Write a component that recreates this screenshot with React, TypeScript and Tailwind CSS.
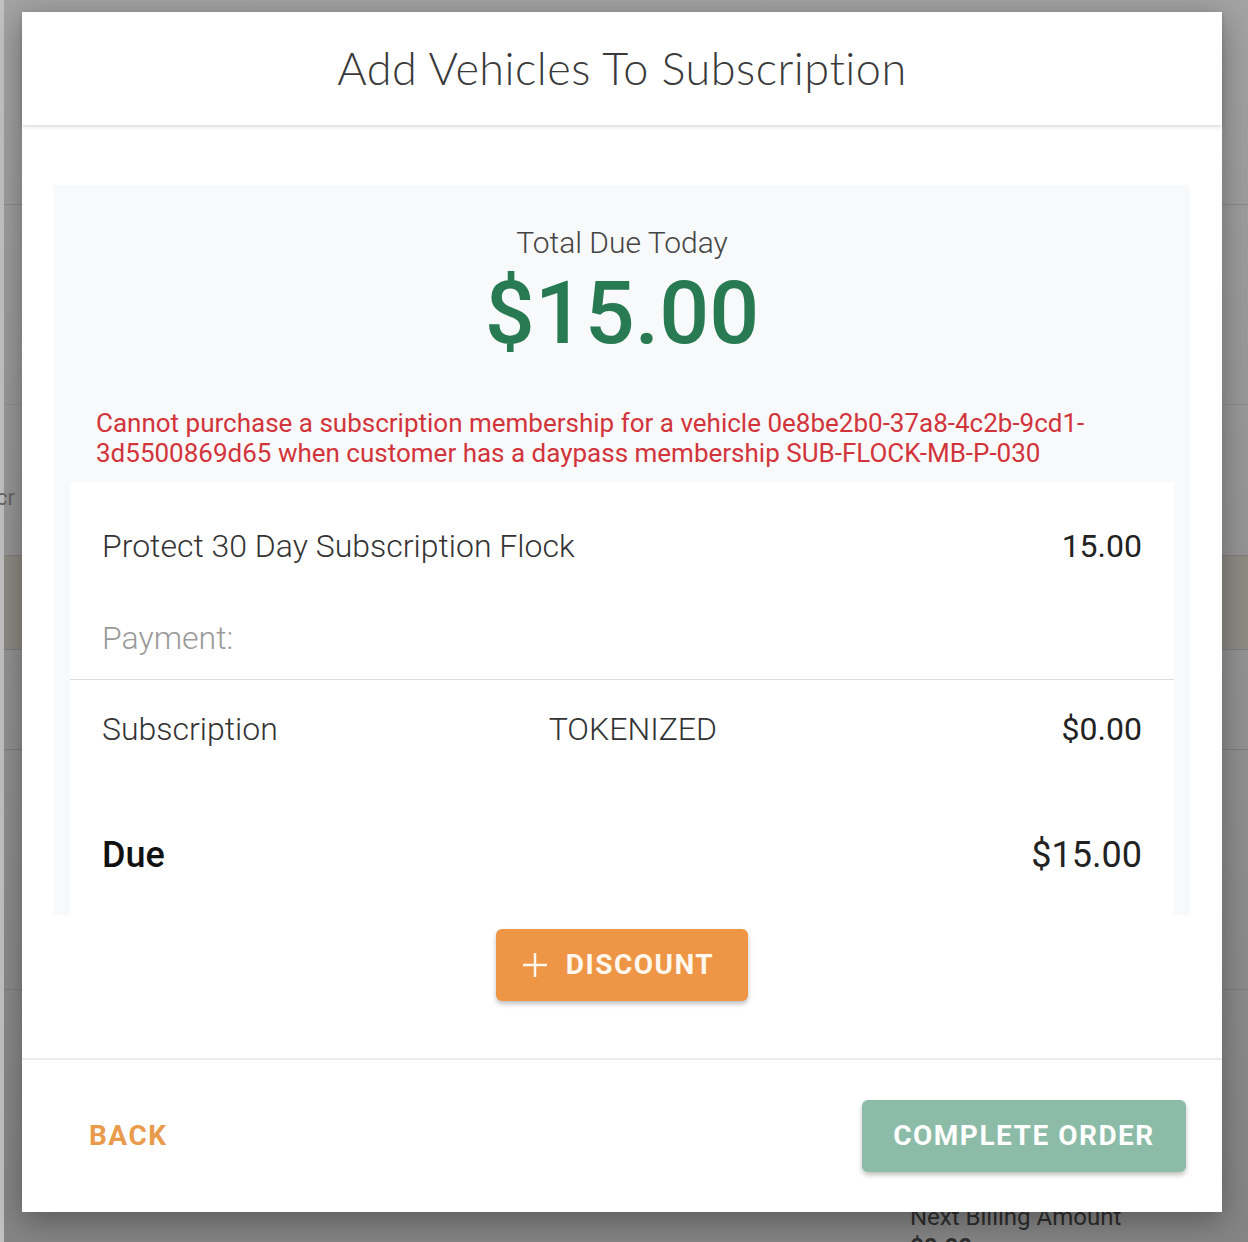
import React, { FC } from "react";

const Row: FC<{ className?: string; children: React.ReactNode }> = ({ className = "", children }) => (
  <div className={`flex items-center justify-between px-8 leading-[40px] ${className}`}>{children}</div>
);

const App: FC = () => {
  return (
    <div className="relative h-[1242px] w-[1248px] overflow-hidden bg-gradient-to-b from-[#a3a3a3] to-[#858585] font-['Roboto',sans-serif]">
      {/* page behind the overlay */}
      <div className="flex h-full flex-col border-l-4 border-[#c2c2c2]">
        <div className="h-[205px] border-b border-[#8a8a8a]" />
        <div className="h-[200px] border-b border-[#8e8e8e]" />
        <div className="flex h-[150px] items-center pt-[34px] text-[22px] text-[#666]">
          <span className="-ml-2">cr</span>
        </div>
        <div className="h-[95px] border-y border-[#7f7f7f] bg-[#8e8b83]" />
        <div className="h-[100px] border-b border-[#7e7e7e]" />
        <div className="h-[240px] border-b border-[#7e7e7e]" />
        <div className="flex flex-1 flex-col justify-end pl-[906px] text-[24px] leading-[30px] text-[#2d2d2d]">
          <span>Next Billing Amount</span>
          <span className="h-[10px] font-bold">$0.00</span>
        </div>
      </div>

      {/* modal */}
      <div className="absolute left-[22px] top-[12px] flex h-[1200px] w-[1200px] flex-col bg-white shadow-[0_8px_30px_rgba(0,0,0,0.35)]">
        <div className="flex h-[113px] items-center justify-center shadow-[0_2px_4px_rgba(0,0,0,0.14)]">
          <h1 className="font-['Lato',sans-serif] text-[45px] font-light tracking-[0.5px] text-[#3a3a3a]">
            Add Vehicles To Subscription
          </h1>
        </div>

        <div className="flex flex-col px-8 pt-[60px]">
          <div className="flex flex-col bg-[#f8f9fa] px-4 pt-[40px]">
            <div className="text-center text-[30px] font-light leading-[36px] text-[#444]">Total Due Today</div>
            <div className="mt-[8px] text-center text-[88px] font-medium leading-[88px] text-[#287a52]">$15.00</div>
            <p className="mt-[51px] px-[26px] text-[26px] leading-[30px] text-[#d2343b]">
              Cannot purchase a subscription membership for a vehicle 0e8be2b0-37a8-4c2b-9cd1-3d5500869d65 when
              customer has a daypass membership SUB-FLOCK-MB-P-030
            </p>
            <div className="mt-[14px] bg-white text-[32px]">
              <Row className="pt-[44px]">
                <span className="font-light text-[#333]">Protect 30 Day Subscription Flock</span>
                <span className="text-[#222]">15.00</span>
              </Row>
              <Row className="pb-[21px] pt-[52px]">
                <span className="font-light text-[#9a9a9a]">Payment:</span>
              </Row>
              <div className="h-px bg-[#dcdcdc]" />
              <div className="grid grid-cols-3 items-center px-8 pt-[29px] leading-[40px]">
                <span className="font-light text-[#333]">Subscription</span>
                <span className="pl-[100px] font-light text-[#333]">TOKENIZED</span>
                <span className="text-right text-[#222]">$0.00</span>
              </div>
              <Row className="pb-[40px] pt-[86px] text-[36px]">
                <span className="font-medium text-[#111]">Due</span>
                <span className="text-[#222]">$15.00</span>
              </Row>
            </div>
          </div>
        </div>

        <div className="mt-[14px] flex justify-center">
          <button className="flex h-[72px] w-[252px] items-center justify-center gap-[18px] rounded-md bg-[#ee9646] pr-[8px] text-[28px] font-bold tracking-[1.5px] text-[#fff8ee] shadow-[0_3px_5px_rgba(0,0,0,0.25)]">
            <svg width="26" height="26" viewBox="0 0 26 26" stroke="currentColor" strokeWidth="2.5" fill="none">
              <path d="M13 1v24M1 13h24" />
            </svg>
            DISCOUNT
          </button>
        </div>

        <div className="mt-[57px] h-[2px] bg-[#ececec]" />

        <div className="flex flex-1 items-center justify-between pl-[67px] pr-[36px]">
          <button className="text-[28px] font-bold tracking-[1.5px] text-[#e99a4b]">BACK</button>
          <button className="h-[72px] w-[324px] rounded-md bg-[#8cbba7] text-[28px] font-bold tracking-[1.5px] text-white shadow-[0_3px_5px_rgba(0,0,0,0.25)]">
            COMPLETE ORDER
          </button>
        </div>
      </div>
    </div>
  );
};

export default App;
